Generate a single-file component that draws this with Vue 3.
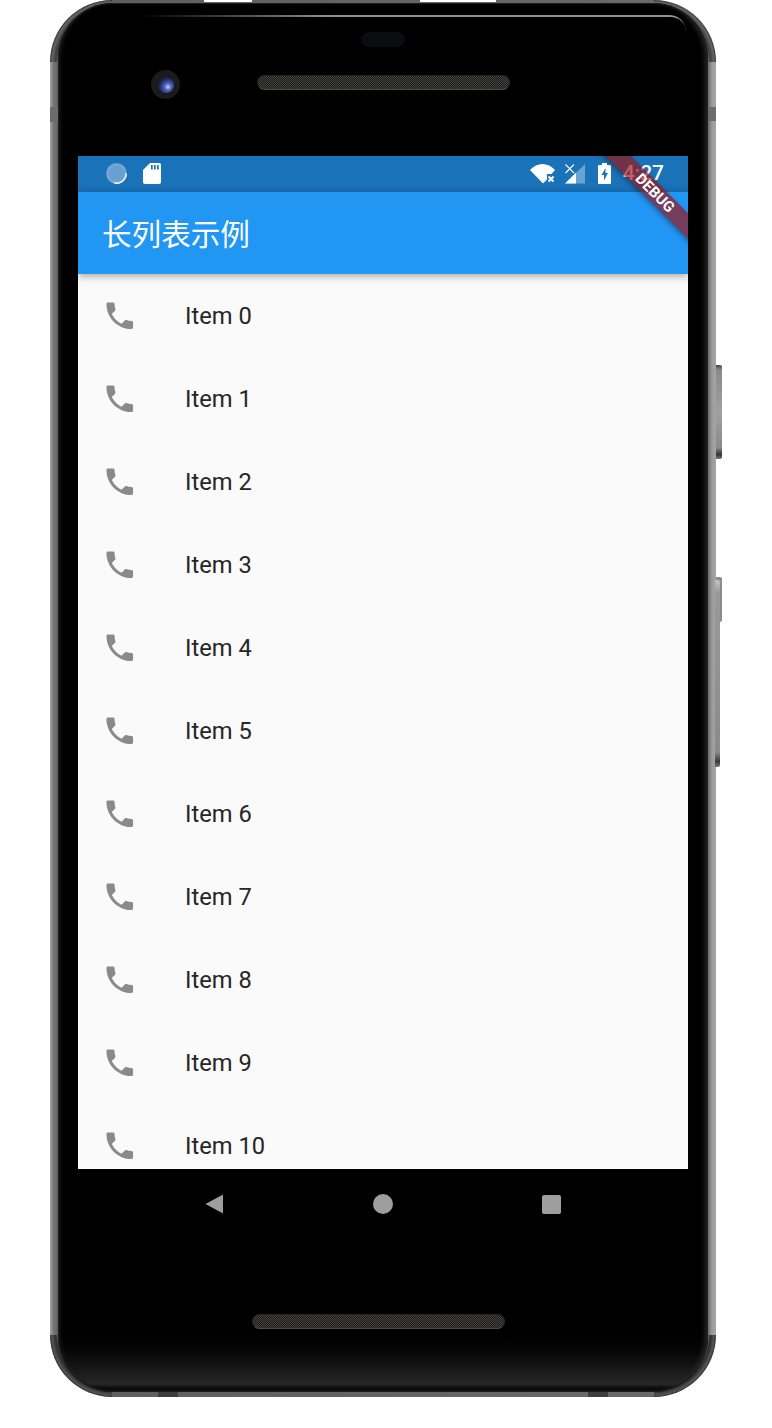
<script setup>
const items = Array.from({ length: 11 }, (_, i) => `Item ${i}`)
</script>

<template>
  <div class="page">
    <div class="phone">
      <!-- edge details on the metal frame -->
      <span class="gap gap-a"></span>
      <span class="gap gap-b"></span>
      <span class="tick tick-left"></span>
      <span class="tick tick-right"></span>
      <span class="tick tick-bottom-l"></span>
      <span class="tick tick-bottom-r"></span>
      <span class="side-btn volume"></span>
      <span class="side-btn power"></span>
      <span class="side-btn power-strip"></span>

      <div class="shell">
        <span class="glare"></span>

        <div class="bezel-top">
          <div class="sensor"></div>
          <div class="bezel-row">
            <div class="camera"><span class="lens"></span></div>
            <div class="speaker"></div>
          </div>
        </div>

        <div class="screen">
          <!-- Status bar -->
          <div class="status-bar">
            <svg class="ic-spinner" width="21" height="21" viewBox="0 0 21 21">
              <circle cx="10.5" cy="10.5" r="10.5" fill="#6aa0cf" />
              <circle cx="10.5" cy="10.5" r="8.8" fill="none" stroke="#fff" stroke-opacity=".35" stroke-width="1.2" stroke-dasharray="1 1.4" />
              <path d="M20.2 10.5A9.7 9.7 0 0 1 8 19.9" fill="none" stroke="#fff" stroke-width="1.4" />
            </svg>
            <svg class="ic-sd" width="18" height="21" viewBox="0 0 18 21">
              <path d="M7 0H16a2 2 0 0 1 2 2V19a2 2 0 0 1-2 2H2a2 2 0 0 1-2-2V7Z" fill="#fff" />
              <path d="M8 2h1.7v4.5H8zM11 2h1.7v4.5H11zM14 2h1.7v4.5H14z" fill="#1a72b8" />
            </svg>
            <div class="status-right">
              <svg class="ic-wifi" width="26" height="20" viewBox="0 0 26 20">
                <path d="M0 6C7-2 18-2 25 6L21.5 10H17V15.5L13 19.5Z" fill="#fff" />
                <path d="M18.5 12.5l5 5M23.5 12.5l-5 5" stroke="#fff" stroke-width="2" fill="none" />
              </svg>
              <svg class="ic-signal" width="21" height="20" viewBox="0 0 21 20">
                <path d="M0 19.5 20 0V19.5Z" fill="#fff" fill-opacity=".35" />
                <path d="M0 19.5 11 8.8V19.5Z" fill="#fff" />
                <path d="M.5.5l8.5 8.5M9 .5.5 9" stroke="#fff" stroke-width="1.1" fill="none" />
              </svg>
              <svg class="ic-battery" width="13" height="21" viewBox="0 0 13 21">
                <path d="M4 0H9V2H12a1 1 0 0 1 1 1V20a1 1 0 0 1-1 1H1a1 1 0 0 1-1-1V3a1 1 0 0 1 1-1H4Z" fill="#fff" />
                <path d="M7.5 5 3.5 12H6V17.5L10 10H7.5Z" fill="#1a72b8" />
              </svg>
              <span class="time">4:27</span>
            </div>
          </div>

          <!-- App bar -->
          <div class="app-bar">
            <h1 class="title">长列表示例</h1>
          </div>

          <!-- List -->
          <div class="list">
            <div v-for="item in items" :key="item" class="list-item">
              <svg class="ic-phone" viewBox="0 0 24 24">
                <path d="M6.62 10.79c1.44 2.83 3.76 5.14 6.59 6.59l2.2-2.2c.27-.27.67-.36 1.02-.24 1.12.37 2.33.57 3.57.57.55 0 1 .45 1 1V20c0 .55-.45 1-1 1-9.39 0-17-7.61-17-17 0-.55.45-1 1-1h3.5c.55 0 1 .45 1 1 0 1.25.2 2.45.57 3.57.11.35.03.74-.25 1.02l-2.2 2.2z" />
              </svg>
              <span class="item-label">{{ item }}</span>
            </div>
          </div>

          <div class="debug-banner">DEBUG</div>
        </div>

        <!-- Nav buttons -->
        <div class="nav">
          <svg class="nav-back" width="19" height="20" viewBox="0 0 19 20">
            <path d="M18 .5V19.5L.5 10Z" fill="#9e9e9e" />
          </svg>
          <span class="nav-home"></span>
          <span class="nav-recent"></span>
        </div>

        <div class="bezel-bottom">
          <div class="speaker speaker-bottom"></div>
        </div>
      </div>
    </div>
  </div>
</template>

<style scoped>
.page {
  width: 772px;
  height: 1428px;
  background: #fff;
  overflow: hidden;
}

/* Phone body */
.phone {
  position: relative;
  width: 666px;
  height: 1397px;
  margin-left: 50px;
  padding: 3px 8px 5px;
  box-sizing: border-box;
  border-radius: 62px;
  background:
    radial-gradient(circle at 100% 100%, transparent 54px, #3a3a3a 56px, #666 60px, #2c2c2c 62px) 0 0 / 62px 62px no-repeat,
    radial-gradient(circle at 0 100%, transparent 54px, #3a3a3a 56px, #666 60px, #2c2c2c 62px) 100% 0 / 62px 62px no-repeat,
    radial-gradient(circle at 100% 0, transparent 54px, #2a2a2a 56px, #555 60px, #2c2c2c 62px) 0 100% / 62px 62px no-repeat,
    radial-gradient(circle at 0 0, transparent 54px, #2a2a2a 56px, #555 60px, #2c2c2c 62px) 100% 100% / 62px 62px no-repeat,
    linear-gradient(90deg, #a8a8a8 0, #7a7a7a 3px, #5e5e5e 8px, #6a6a6a 658px, #9a9a9a 662px, #a6a6a6 666px);
}

.shell {
  position: relative;
  height: 100%;
  border-radius: 55px;
  box-sizing: border-box;
  padding: 0 20px;
  background: linear-gradient(180deg, #000 0, #000 1330px, #050505 1346px, #131313 1362px, #282828 1381px, #0c0c0c 1385px);
  box-shadow: inset 0 0 0 1px #1e1e1e, inset -5px 0 5px -2px #2a2a2a, inset 4px 0 4px -2px #1c1c1c;
  display: flex;
  flex-direction: column;
}

.glare {
  position: absolute;
  top: 12px;
  left: 82px;
  right: 22px;
  height: 16px;
  box-sizing: border-box;
  border-top: 2px solid #8d9496;
  border-radius: 0 34px 0 0;
  -webkit-mask-image: linear-gradient(90deg, transparent 0, #000 35%);
  mask-image: linear-gradient(90deg, transparent 0, #000 35%);
}

.gap {
  position: absolute;
  top: 0;
  height: 2px;
  background: #fff;
}
.gap-a { left: 154px; width: 48px; }
.gap-b { left: 370px; width: 76px; }

.tick {
  position: absolute;
  background: #6c6c6c;
}
.tick-left { left: 0; top: 107px; width: 9px; height: 15px; }
.tick-right { right: 0; top: 107px; width: 9px; height: 14px; }
.tick-bottom-l { left: 108px; bottom: 0; width: 20px; height: 8px; background: #3e3e3e; }
.tick-bottom-r { right: 108px; bottom: 0; width: 20px; height: 8px; background: #3e3e3e; }

.side-btn {
  position: absolute;
  border-radius: 0 2px 2px 0;
}
.volume {
  left: 666px;
  top: 365px;
  width: 6px;
  height: 94px;
  background: linear-gradient(180deg, #444 0, #8a8a8a 5px, #a0a0a0 50%, #8a8a8a 88%, #333 95%, #777 100%);
}
.power {
  left: 666px;
  top: 577px;
  width: 6px;
  height: 45px;
  background: #8c8c8c;
}
.power-strip {
  left: 665px;
  top: 580px;
  width: 5px;
  height: 187px;
  background: linear-gradient(180deg, #c4c4c4 0, #9a9a9a 12px, #8a8a8a 92%, #3a3a3a 97%, #777 100%);
}

/* Top bezel */
.bezel-top {
  height: 153px;
  flex-shrink: 0;
  display: flex;
  flex-direction: column;
  align-items: center;
  padding-top: 29px;
  box-sizing: border-box;
}

.sensor {
  width: 44px;
  height: 15px;
  border-radius: 8px;
  background: #0a0c10;
}

.bezel-row {
  width: 100%;
  display: flex;
  align-items: flex-start;
  margin-top: 23px;
  padding-left: 73px;
  box-sizing: border-box;
}

.camera {
  width: 29px;
  height: 29px;
  border-radius: 50%;
  background: #1b1b1d;
  display: flex;
  align-items: center;
  justify-content: center;
}

.lens {
  width: 16px;
  height: 16px;
  border-radius: 50%;
  background: radial-gradient(circle at 62% 62%, #c3cff2 0, #4a60b8 26%, #1a2458 62%, #05060c 100%);
}

.speaker {
  width: 253px;
  height: 15px;
  margin-top: 5px;
  margin-left: 77px;
  box-sizing: border-box;
  border-radius: 8px;
  border: 1px solid #262626;
  border-bottom-color: #4a4a46;
  background: repeating-conic-gradient(#1c1c1a 0 25%, #44443d 0 50%) 0 0 / 2px 2px;
}

/* Screen */
.screen {
  position: relative;
  width: 610px;
  height: 1013px;
  flex-shrink: 0;
  overflow: hidden;
  background: #fafafa;
  display: flex;
  flex-direction: column;
}

.status-bar {
  height: 36px;
  flex-shrink: 0;
  box-sizing: border-box;
  padding: 7px 24px 0 28px;
  background: #1a72b8;
  display: flex;
  align-items: flex-start;
  gap: 16px;
}

.status-right {
  margin-left: auto;
  display: flex;
  align-items: flex-start;
}

.ic-wifi { margin-top: 1px; }
.ic-signal { margin: 1px 0 0 9px; }
.ic-battery { margin-left: 12px; }

.time {
  margin-left: 12px;
  font-family: Roboto, sans-serif;
  font-size: 21px;
  font-weight: 500;
  line-height: 21px;
  color: #fff;
}

.app-bar {
  height: 82px;
  flex-shrink: 0;
  box-sizing: border-box;
  padding-left: 24px;
  background: #2196f3;
  display: flex;
  align-items: center;
  box-shadow: 0 2px 8px rgba(0, 0, 0, 0.35);
  position: relative;
  z-index: 1;
}

.title {
  margin: 0;
  font-family: "Noto Sans CJK SC", sans-serif;
  font-size: 29.6px;
  font-weight: 400;
  line-height: 40px;
  color: #fff;
}

.list {
  flex: 1;
  overflow: hidden;
}

.list-item {
  height: 83px;
  box-sizing: border-box;
  padding-left: 24px;
  display: flex;
  align-items: center;
}

.ic-phone {
  width: 35.5px;
  height: 35.5px;
  fill: #8a8a8a;
  flex-shrink: 0;
}

.item-label {
  margin-left: 47.5px;
  font-family: Roboto, sans-serif;
  font-size: 23.7px;
  color: #262626;
}

.debug-banner {
  position: absolute;
  z-index: 2;
  left: 467px;
  top: 28px;
  width: 220px;
  height: 18px;
  transform: rotate(45deg);
  background: rgba(160, 15, 15, 0.66);
  box-shadow: 0 2px 5px rgba(0, 0, 0, 0.35);
  font-family: Roboto, sans-serif;
  font-size: 15px;
  font-weight: 700;
  line-height: 18px;
  text-align: center;
  color: #fff;
}

/* Nav */
.nav {
  height: 70px;
  flex-shrink: 0;
  display: flex;
  align-items: center;
  justify-content: center;
  gap: 149px;
}

.nav-home {
  width: 20px;
  height: 20px;
  border-radius: 50%;
  background: #9e9e9e;
}

.nav-recent {
  width: 19px;
  height: 19px;
  border-radius: 2px;
  background: #9e9e9e;
}

.bezel-bottom {
  flex: 1;
  display: flex;
  flex-direction: column;
  align-items: center;
  padding-top: 75px;
  box-sizing: border-box;
}

.speaker-bottom {
  width: 253px;
  margin-top: 0;
  margin-left: -9px;
}
</style>

<style>
html, body {
  margin: 0;
  background: #fff;
}
</style>
